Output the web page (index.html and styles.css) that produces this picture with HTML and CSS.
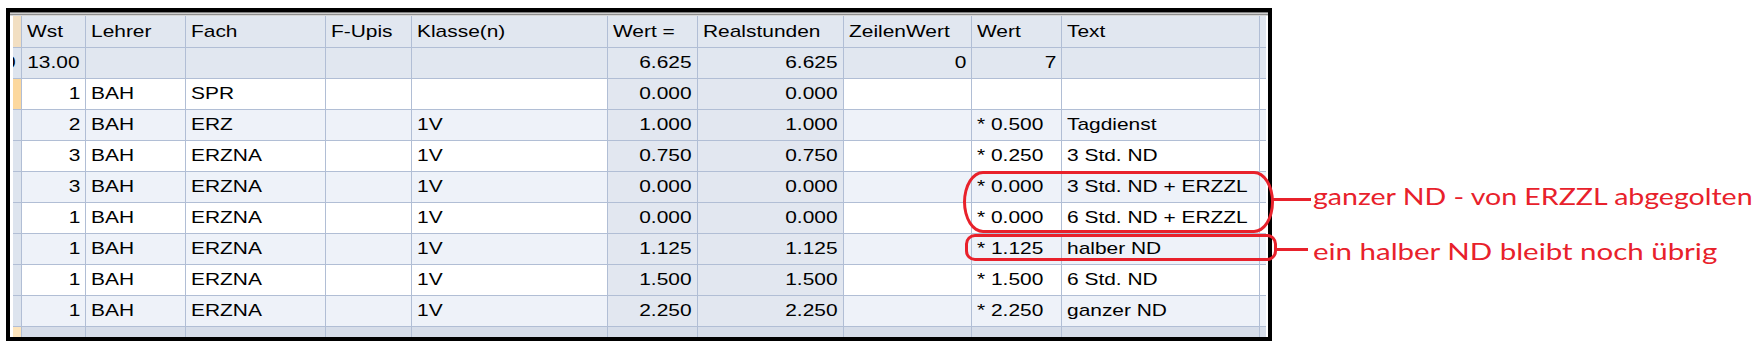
FILE: index.html
```html
<!DOCTYPE html>
<html lang="de">
<head>
<meta charset="utf-8">
<title>Stundenliste</title>
<link rel="stylesheet" href="styles.css">
</head>
<body>
<div class="page">
  <div class="window">
    <div class="topline"></div>
    <div class="gridwrap">
      <div class="row head">
        <div class="c rh tan"></div>
        <div class="c"><span class="t">Wst</span></div>
        <div class="c"><span class="t">Lehrer</span></div>
        <div class="c"><span class="t">Fach</span></div>
        <div class="c"><span class="t">F-Upis</span></div>
        <div class="c"><span class="t">Klasse(n)</span></div>
        <div class="c"><span class="t">Wert =</span></div>
        <div class="c"><span class="t">Realstunden</span></div>
        <div class="c"><span class="t">ZeilenWert</span></div>
        <div class="c"><span class="t">Wert</span></div>
        <div class="c"><span class="t">Text</span></div>
        <div class="c edge"></div>
      </div>
      <div class="row total">
        <div class="c rh"><span class="t cut">0</span></div>
        <div class="c r"><span class="t">13.00</span></div>
        <div class="c"></div>
        <div class="c"></div>
        <div class="c"></div>
        <div class="c"></div>
        <div class="c r"><span class="t">6.625</span></div>
        <div class="c r"><span class="t">6.625</span></div>
        <div class="c r"><span class="t">0</span></div>
        <div class="c r"><span class="t">7</span></div>
        <div class="c"></div>
        <div class="c edge"></div>
      </div>
      <div class="row white">
        <div class="c rh cur"></div>
        <div class="c r"><span class="t">1</span></div>
        <div class="c"><span class="t">BAH</span></div>
        <div class="c"><span class="t">SPR</span></div>
        <div class="c"></div>
        <div class="c"></div>
        <div class="c r calc"><span class="t">0.000</span></div>
        <div class="c r calc"><span class="t">0.000</span></div>
        <div class="c"></div>
        <div class="c"></div>
        <div class="c"></div>
        <div class="c edge"></div>
      </div>
      <div class="row alt">
        <div class="c rh"></div>
        <div class="c r"><span class="t">2</span></div>
        <div class="c"><span class="t">BAH</span></div>
        <div class="c"><span class="t">ERZ</span></div>
        <div class="c"></div>
        <div class="c"><span class="t">1V</span></div>
        <div class="c r calc"><span class="t">1.000</span></div>
        <div class="c r calc"><span class="t">1.000</span></div>
        <div class="c"></div>
        <div class="c"><span class="t">* 0.500</span></div>
        <div class="c"><span class="t">Tagdienst</span></div>
        <div class="c edge"></div>
      </div>
      <div class="row white">
        <div class="c rh"></div>
        <div class="c r"><span class="t">3</span></div>
        <div class="c"><span class="t">BAH</span></div>
        <div class="c"><span class="t">ERZNA</span></div>
        <div class="c"></div>
        <div class="c"><span class="t">1V</span></div>
        <div class="c r calc"><span class="t">0.750</span></div>
        <div class="c r calc"><span class="t">0.750</span></div>
        <div class="c"></div>
        <div class="c"><span class="t">* 0.250</span></div>
        <div class="c"><span class="t">3 Std. ND</span></div>
        <div class="c edge"></div>
      </div>
      <div class="row alt">
        <div class="c rh"></div>
        <div class="c r"><span class="t">3</span></div>
        <div class="c"><span class="t">BAH</span></div>
        <div class="c"><span class="t">ERZNA</span></div>
        <div class="c"></div>
        <div class="c"><span class="t">1V</span></div>
        <div class="c r calc"><span class="t">0.000</span></div>
        <div class="c r calc"><span class="t">0.000</span></div>
        <div class="c"></div>
        <div class="c"><span class="t">* 0.000</span></div>
        <div class="c"><span class="t">3 Std. ND + ERZZL</span></div>
        <div class="c edge"></div>
      </div>
      <div class="row white">
        <div class="c rh"></div>
        <div class="c r"><span class="t">1</span></div>
        <div class="c"><span class="t">BAH</span></div>
        <div class="c"><span class="t">ERZNA</span></div>
        <div class="c"></div>
        <div class="c"><span class="t">1V</span></div>
        <div class="c r calc"><span class="t">0.000</span></div>
        <div class="c r calc"><span class="t">0.000</span></div>
        <div class="c"></div>
        <div class="c"><span class="t">* 0.000</span></div>
        <div class="c"><span class="t">6 Std. ND + ERZZL</span></div>
        <div class="c edge"></div>
      </div>
      <div class="row alt">
        <div class="c rh"></div>
        <div class="c r"><span class="t">1</span></div>
        <div class="c"><span class="t">BAH</span></div>
        <div class="c"><span class="t">ERZNA</span></div>
        <div class="c"></div>
        <div class="c"><span class="t">1V</span></div>
        <div class="c r calc"><span class="t">1.125</span></div>
        <div class="c r calc"><span class="t">1.125</span></div>
        <div class="c"></div>
        <div class="c"><span class="t">* 1.125</span></div>
        <div class="c"><span class="t">halber ND</span></div>
        <div class="c edge"></div>
      </div>
      <div class="row white">
        <div class="c rh"></div>
        <div class="c r"><span class="t">1</span></div>
        <div class="c"><span class="t">BAH</span></div>
        <div class="c"><span class="t">ERZNA</span></div>
        <div class="c"></div>
        <div class="c"><span class="t">1V</span></div>
        <div class="c r calc"><span class="t">1.500</span></div>
        <div class="c r calc"><span class="t">1.500</span></div>
        <div class="c"></div>
        <div class="c"><span class="t">* 1.500</span></div>
        <div class="c"><span class="t">6 Std. ND</span></div>
        <div class="c edge"></div>
      </div>
      <div class="row alt">
        <div class="c rh"></div>
        <div class="c r"><span class="t">1</span></div>
        <div class="c"><span class="t">BAH</span></div>
        <div class="c"><span class="t">ERZNA</span></div>
        <div class="c"></div>
        <div class="c"><span class="t">1V</span></div>
        <div class="c r calc"><span class="t">2.250</span></div>
        <div class="c r calc"><span class="t">2.250</span></div>
        <div class="c"></div>
        <div class="c"><span class="t">* 2.250</span></div>
        <div class="c"><span class="t">ganzer ND</span></div>
        <div class="c edge"></div>
      </div>
      <div class="row new">
        <div class="c rh newrh"></div>
        <div class="c"></div>
        <div class="c"></div>
        <div class="c"></div>
        <div class="c"></div>
        <div class="c"></div>
        <div class="c"></div>
        <div class="c"></div>
        <div class="c"></div>
        <div class="c"></div>
        <div class="c"></div>
        <div class="c edge"></div>
      </div>
    </div>
  </div>

  <div class="ring ring1"></div>
  <div class="ring ring2"></div>
  <div class="lead lead1"></div>
  <div class="lead lead2"></div>
  <div class="note note1">ganzer ND - von ERZZL abgegolten</div>
  <div class="note note2">ein halber ND bleibt noch übrig</div>
</div>
</body>
</html>
```

FILE: styles.css
```css
* { box-sizing: border-box; }

body {
  margin: 0;
  background: #ffffff;
  font-family: "Liberation Sans", Arial, sans-serif;
  color: #000;
}

.page {
  position: relative;
  width: 1761px;
  height: 349px;
  padding: 8px 0 0 6px;
  overflow: hidden;
}

.window {
  width: 1266px;
  border: 4px solid #000;
  background: #fff;
}

.topline {
  height: 4px;
  background: linear-gradient(#7f7f7f 0 1px, #cfcfcf 1px 2px, #8e8e8e 2px 3px, #d6d6d6 3px 4px);
}

.gridwrap {
  padding: 0 2px 0 3px;
}

.row {
  display: grid;
  grid-template-columns: 8px 64px 100px 140px 86px 196px 90px 146px 128px 90px 198px 7px;
  height: 31px;
  border-top: 1px solid #b1bed5;
}

.row.head {
  border-top: none;
  background: #e1e7f0;
}

.row.total { background: #e1e7f0; }
.row.white { background: #ffffff; }
.row.alt { background: #eef2f9; }
.row.new { height: 11px; background: #d6dde9; }

.c {
  border-left: 1px solid #b1bed5;
  padding: 0 5px;
  font-size: 17px;
  line-height: 30px;
  white-space: nowrap;
  overflow: hidden;
}

.head .c { line-height: 31px; }

.c.rh {
  border-left: none;
  padding: 0;
  background: #dde4ee;
}

.c.rh.tan { background: #f2dfc2; }
.c.rh.cur { background: #fcd89e; }
.c.rh.newrh { background: #fde5bd; }

.c.edge { padding: 0; }

.c.r { text-align: right; }

.c.calc { background: #e2e7f0; }

.t {
  display: inline-block;
  transform: scaleX(1.23);
  transform-origin: 0 50%;
}

.r .t { transform-origin: 100% 50%; }

.t.cut { margin-left: -9px; }

.ring {
  position: absolute;
  border: 3px solid #e8212b;
}

.ring1 {
  left: 963px;
  top: 171px;
  width: 311px;
  height: 62px;
  border-radius: 20px / 31px;
}

.ring2 {
  left: 965px;
  top: 234px;
  width: 312px;
  height: 27px;
  border-radius: 10px;
}

.lead {
  position: absolute;
  height: 3px;
  background: #e8212b;
}

.lead1 { left: 1273px; top: 198px; width: 38px; }
.lead2 { left: 1276px; top: 248px; width: 32px; }

.note {
  position: absolute;
  left: 1313px;
  font-family: Lato, "Open Sans", sans-serif;
  font-size: 23px;
  line-height: 1;
  color: #e8212b;
  white-space: nowrap;
  transform-origin: 0 0;
}

.note1 { top: 185px; transform: scaleX(1.24); }
.note2 { top: 240px; transform: scaleX(1.28); }
```
